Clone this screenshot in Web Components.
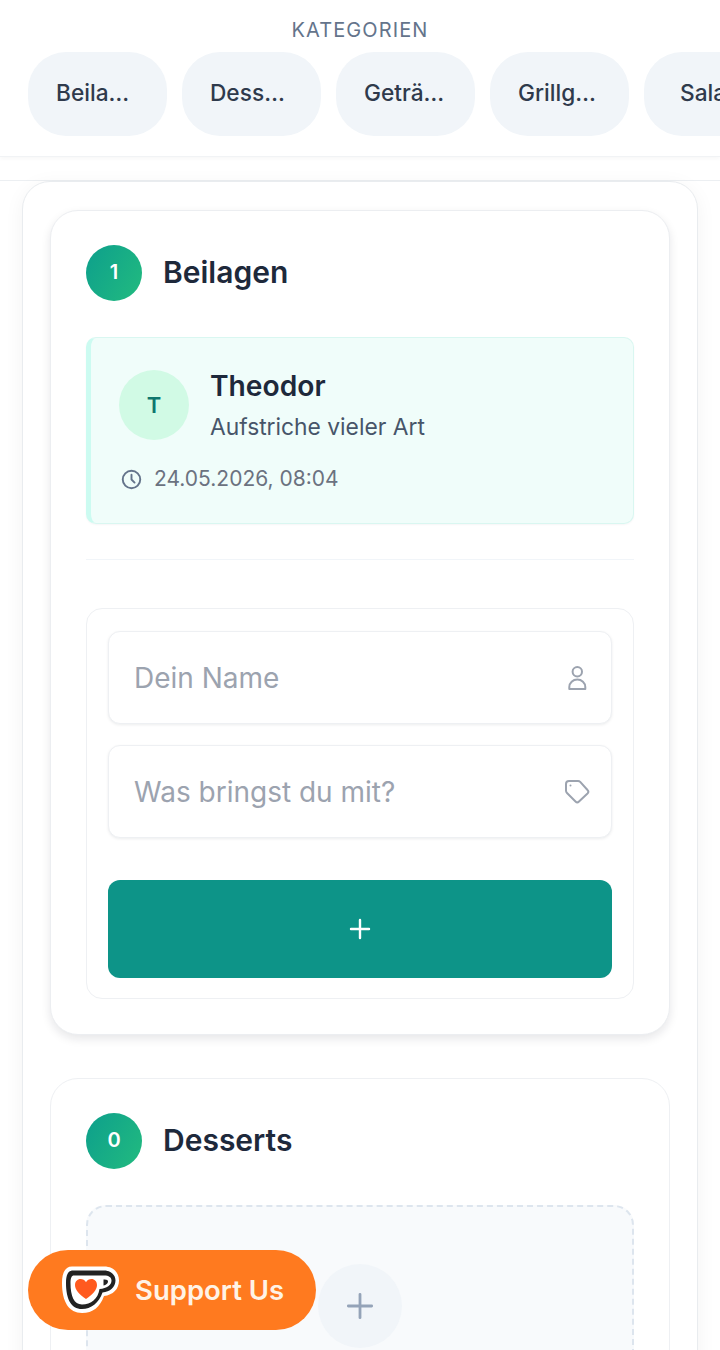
<!DOCTYPE html>
<html lang="de">
<head>
<meta charset="utf-8">
<title>Kategorien</title>
<style>
  html, body { margin: 0; height: 1350px; overflow: hidden; background: #fff; }
  body { font-family: Inter, "Liberation Sans", sans-serif; color: #1e293b; position: relative; }
</style>
</head>
<body>
<category-bar>
  <cat-pill>Beilagen</cat-pill>
  <cat-pill>Desserts</cat-pill>
  <cat-pill>Getränke</cat-pill>
  <cat-pill>Grillgerichte</cat-pill>
  <cat-pill>Salate</cat-pill>
</category-bar>

<page-main>
  <section-card count="1" title="Beilagen" raised>
    <entry-item name="Theodor" what="Aufstriche vieler Art" time="24.05.2026, 08:04"></entry-item>
    <hr-line></hr-line>
    <add-form></add-form>
  </section-card>
  <section-card count="0" title="Desserts">
    <empty-box></empty-box>
  </section-card>
</page-main>

<support-button>Support Us</support-button>

<script>
// small helper, every element just sets its markup in the constructor
class Base extends HTMLElement {
  render(html) {
    this.attachShadow({ mode: "open" }).innerHTML = html;
  }
}

class CategoryBar extends Base {
  constructor() {
    super();
    this.render(`
      <style>
        :host { display: block; height: 157px; box-sizing: border-box; background: #fff;
          border-bottom: 1px solid #f1f3f5; box-shadow: 0 2px 4px rgba(15,23,42,.03); overflow: hidden; }
        .label { height: 52px; padding-top: 18px; box-sizing: border-box; text-align: center;
          font-size: 20px; line-height: 24px; font-weight: 400; letter-spacing: 1.1px; color: #64748b; }
        .row { display: flex; gap: 15px; padding-left: 28px; }
      </style>
      <div class="label">KATEGORIEN</div>
      <div class="row"><slot></slot></div>`);
  }
}

class CatPill extends Base {
  constructor() {
    super();
    this.render(`
      <style>
        :host { display: block; flex: none; width: 139px; height: 84px; box-sizing: border-box;
          padding: 0 28px; border-radius: 38px; background: #f1f5f9; }
        .t { line-height: 82px; font-size: 22.7px; font-weight: 500; color: #2f3a4c; text-align: center;
          white-space: nowrap; overflow: hidden; text-overflow: ellipsis; }
      </style>
      <div class="t"><slot></slot></div>`);
  }
}

class PageMain extends Base {
  constructor() {
    super();
    this.render(`
      <style>
        :host { display: block; margin-top: 23px; border-top: 1px solid #eceff2; }
        .outer { margin: 0 22px; box-sizing: border-box; height: 1300px; padding: 28px 27px 0;
          border: 1px solid #e9ecef; border-radius: 28px; background: #fff;
          box-shadow: 0 4px 20px rgba(15,23,42,.05);
          display: flex; flex-direction: column; gap: 43px; }
      </style>
      <div class="outer"><slot></slot></div>`);
  }
}

class SectionCard extends Base {
  constructor() {
    super();
    this.render(`
      <style>
        :host { display: block; box-sizing: border-box; flex: none; padding: 34px 35px 35px; background: #fff;
          border: 1px solid #eef0f3; border-radius: 28px; }
        :host([raised]) { box-shadow: 0 4px 10px rgba(15,23,42,.10); border-color: #eceef1; }
        .head { display: flex; align-items: center; gap: 21px; margin-bottom: 36px; }
        .badge { width: 56px; height: 56px; border-radius: 50%; display: flex; align-items: center;
          justify-content: center; color: #fff; font-size: 20px; font-weight: 600;
          padding-bottom: 2px; box-sizing: border-box;
          background: linear-gradient(120deg, #0d9f8c, #22bb7f); }
        h2 { margin: 0 0 2px; font-size: 30px; line-height: 36px; font-weight: 600; color: #1e293b; }
      </style>
      <div class="head">
        <div class="badge">${this.getAttribute("count")}</div>
        <h2>${this.getAttribute("title")}</h2>
      </div>
      <slot></slot>`);
  }
}

class EntryItem extends Base {
  constructor() {
    super();
    this.render(`
      <style>
        :host { display: block; box-sizing: border-box; height: 187px; padding: 32px 28px 0;
          background: #f0fdfa; border: 1px solid #d9f7f1; border-left: 5px solid #ccfbf1; border-radius: 10px;
          box-shadow: 0 1px 2px rgba(15,23,42,.04); }
        .top { display: flex; gap: 21px; }
        .avatar { flex: none; width: 70px; height: 70px; border-radius: 50%; background: #d1fae5;
          color: #0f766e; font-size: 22px; font-weight: 600; display: flex; align-items: center; justify-content: center; }
        .name { font-size: 28.2px; line-height: 32px; font-weight: 600; color: #1e293b; margin-bottom: 11px; }
        .what { font-size: 22.8px; line-height: 28px; color: #475569; }
        .time { display: flex; align-items: center; gap: 12px; margin-top: 24px; margin-left: 2px;
          font-size: 21px; line-height: 28px; color: #6b7280; }
        svg { width: 21px; height: 21px; flex: none; }
      </style>
      <div class="top">
        <div class="avatar">${this.getAttribute("name")[0]}</div>
        <div>
          <div class="name">${this.getAttribute("name")}</div>
          <div class="what">${this.getAttribute("what")}</div>
        </div>
      </div>
      <div class="time">
        <svg viewBox="0 0 24 24" fill="none" stroke="#64748b" stroke-width="2.2" stroke-linecap="round" stroke-linejoin="round">
          <circle cx="12" cy="12" r="10"/><path d="M12 6.500V12l3.500 3.500"/>
        </svg>
        <span>${this.getAttribute("time")}</span>
      </div>`);
  }
}

class HrLine extends Base {
  constructor() {
    super();
    this.render(`<style>:host { display: block; height: 1px; margin: 35px 0 48px; background: #f1f5f9; }</style>`);
  }
}

class FormField extends Base {
  constructor() {
    super();
    this.render(`
      <style>
        :host { display: flex; align-items: center; justify-content: space-between; box-sizing: border-box;
          height: 93px; padding: 0 21px 0 25px; background: #fff; border: 1px solid #eef0f3; border-radius: 12px;
          box-shadow: 0 1px 3px rgba(15,23,42,.08); }
        .ph { font-size: 28px; color: #9ca3af; }
      </style>
      <span class="ph">${this.getAttribute("placeholder")}</span>
      <slot></slot>`);
  }
}

class AddForm extends Base {
  constructor() {
    super();
    this.render(`
      <style>
        :host { display: block; box-sizing: border-box; height: 391px; padding: 22px 21px;
          border: 1px solid #eef0f3; border-radius: 16px; background: #fff; }
        .fields { display: flex; flex-direction: column; gap: 21px; }
        .btn { margin-top: 42px; height: 98px; border-radius: 12px; background: #0d9488;
          display: flex; align-items: center; justify-content: center; }
        .btn svg { width: 24px; height: 24px; }
        form-field svg { width: 26px; height: 26px; display: block; }
      </style>
      <div class="fields">
        <form-field placeholder="Dein Name">
          <svg viewBox="0 0 26 26" fill="none" stroke="#9ca3af" stroke-width="2" stroke-linejoin="round">
            <circle cx="13.300" cy="6.700" r="4.700"/><path d="M5.300 24v-2a8 7.500 0 0 1 16 0v2z"/>
          </svg>
        </form-field>
        <form-field placeholder="Was bringst du mit?">
          <svg viewBox="0 0 26 26" fill="none" stroke="#9ca3af" stroke-width="2" stroke-linejoin="round" stroke-linecap="round">
            <path d="M2 5a3 3 0 0 1 3-3h9a3 3 0 0 1 2.200.900L23.500 11a2.500 2.500 0 0 1 0 3.500L15 22.500a2.500 2.500 0 0 1-3.500 0L3 14a3 3 0 0 1-1-2.200z"/>
            <path d="M6.500 6.500h.01"/>
          </svg>
        </form-field>
      </div>
      <div class="btn">
        <svg viewBox="0 0 24 24" fill="none" stroke="#fff" stroke-width="2.400" stroke-linecap="round"><path d="M12 3v18M3 12h18"/></svg>
      </div>`);
  }
}

class EmptyBox extends Base {
  constructor() {
    super();
    this.render(`
      <style>
        :host { display: block; box-sizing: border-box; height: 300px; padding-top: 57px;
          border: 2px dashed #dde5ee; border-radius: 20px; background: #f8fafc; }
        .plus { width: 84px; height: 84px; margin: 0 auto; border-radius: 50%; background: #f1f5f9;
          display: flex; align-items: center; justify-content: center; }
        svg { width: 28px; height: 28px; }
      </style>
      <div class="plus">
        <svg viewBox="0 0 24 24" fill="none" stroke="#94a3b8" stroke-width="2.400" stroke-linecap="round"><path d="M12 2v20M2 12h20"/></svg>
      </div>`);
  }
}

class SupportButton extends Base {
  constructor() {
    super();
    this.render(`
      <style>
        /* floats over the page like the real widget */
        :host { position: absolute; left: 28px; top: 1250px; width: 288px; height: 80px; box-sizing: border-box;
          padding-left: 32px; display: flex; align-items: center; gap: 14px; border-radius: 40px;
          background: #ff7a1f; color: #fff3e6; font-family: Inter, "Noto Sans", sans-serif;
          font-size: 27.5px; font-weight: 600; }
        svg { width: 61px; height: 50px; flex: none; }
      </style>
      <svg viewBox="0 0 61 50">
        <path d="M12 1.500H44C54 1.500 59 8 59 15.500C59 24 53 30 44 31C40 42 33 48 22 48C9 48 2 37 2 18C2 8 5 1.500 12 1.500Z" fill="#fff"/>
        <path d="M13 5.500H44C51 5.500 55.500 10 55.500 15.500C55.500 22 50 27 42.500 27.500C39 38 31 44 22 44C11 44 6 34 6 18C6 10 8 5.500 13 5.500Z" fill="#222"/>
        <path d="M14 10.500H44C49 10.500 51.500 12.500 51.500 15.500C51.500 20 47 23.500 39.500 24C38 34 31 39.500 22 39.500C14 39.500 10.500 31 10.500 18C10.500 13 11.500 10.500 14 10.500Z" fill="#fff"/>
        <path d="M43.500 14.500C46.500 14.200 48 15 48 16.500C48 18.500 46 20 43.500 20.500Z" fill="#222"/>
        <path d="M26 34C19 29 15 25 15 20C15 16.500 17.500 14 20.500 14C22.800 14 24.800 15.200 26 17.200C27.200 15.200 29.200 14 31.500 14C34.500 14 37 16.500 37 20C37 25 33 29 26 34Z" fill="#ff5a1f"/>
      </svg>
      <span><slot></slot></span>`);
  }
}

customElements.define("category-bar", CategoryBar);
customElements.define("cat-pill", CatPill);
customElements.define("page-main", PageMain);
customElements.define("section-card", SectionCard);
customElements.define("entry-item", EntryItem);
customElements.define("hr-line", HrLine);
customElements.define("form-field", FormField);
customElements.define("add-form", AddForm);
customElements.define("empty-box", EmptyBox);
customElements.define("support-button", SupportButton);
</script>
</body>
</html>
